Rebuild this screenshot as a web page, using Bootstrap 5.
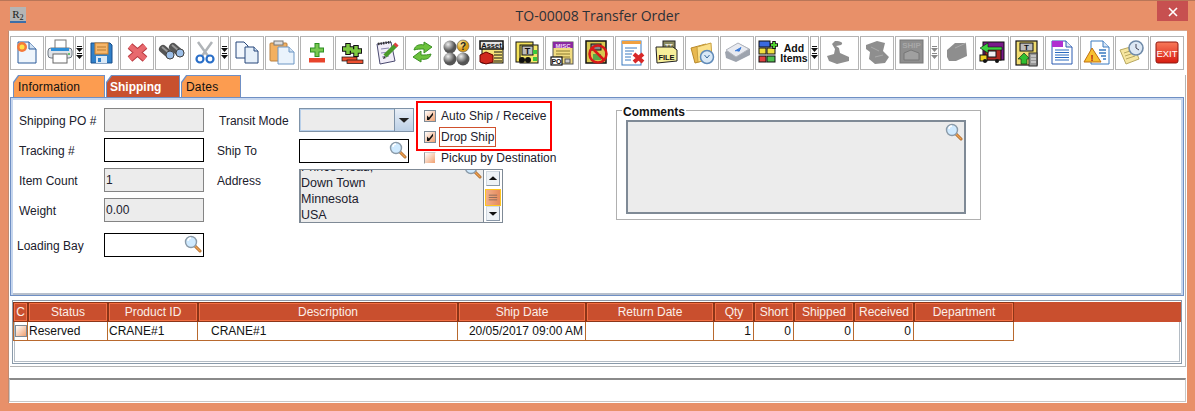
<!DOCTYPE html>
<html lang="en"><head><meta charset="utf-8"><title>TO-00008 Transfer Order</title>
<link href="https://cdn.jsdelivr.net/npm/bootstrap@5.3.0/dist/css/bootstrap.min.css" rel="stylesheet">
<style>
html,body{width:1195px;height:411px;overflow:hidden}
body{background:#e89069;border-top:1px solid #b97658;font:12px/16px "Liberation Sans",Arial,sans-serif;color:#20202c;margin:0}
.tbar{height:29px;position:relative;padding-top:6px}
.r2{width:16px;height:16px;margin-left:10px;background:#b5b5b5;border-bottom:2px solid #3c6ea8;font:11px/14px "Liberation Serif",serif;text-align:center;color:#222;overflow:hidden}
.wtitle{font:14px/29px "Open Sans",sans-serif;color:#2b3138;position:absolute;left:0;right:0;top:0;text-align:center}
.xbtn{position:absolute;left:1157px;top:0;width:31px;height:20px;background:#c75050;color:#fff;text-align:center;line-height:20px}
.wbody{margin:0 8px;height:373px;background:#fff;border-left:1px solid #c08a70;border-top:1px solid #d8a890;padding-left:1px}
.tools{height:43px;padding-top:5px;gap:1px}
.tb{width:34px;height:34px;border:1px solid #b4b4b4;background:#fff;flex:none;overflow:hidden}
.tb svg{display:block;width:100%;height:100%}
.tb.w28{width:29px}.tb.w29{width:29px}.tb.dd{width:9px}.tb.w54{width:54px}.tb.w38{width:39px}
.tabs{height:22px;padding-left:3px;gap:1px;margin-top:1px}
.tabb{position:relative;height:22px;background:#6f8fc4;clip-path:polygon(5px 0,100% 0,100% 100%,0 100%,0 7px);padding:1px 1px 0 1px}
.tabi{height:21px;background:#fc9c50;clip-path:polygon(5px 0,100% 0,100% 100%,0 100%,0 7px);padding:3px 0 0 4px;font-size:12px;letter-spacing:.2px;color:#111}
.tabb.on .tabi{background:#c8502e;color:#fff;font-weight:700;letter-spacing:0;padding-left:3px}
.outer{width:1176px;height:292px;border-right:1px solid #b4b4b4;border-bottom:1px solid #b4b4b4}
.fpanel{width:1174px;height:199px;border:1px solid #6f8fc4;border-top-width:1px;outline:0;background:#fff;box-shadow:inset 0 2px 0 #c6d6ee,inset 2px 0 0 #c6d6ee,inset -2px 0 0 #c6d6ee,inset 0 -2px 0 #b8c0cc;padding:7px 0 0 8px}
.colA{width:185px;padding-top:3px;flex:none}
.frow{height:24px;margin-bottom:6px}
.frow>span{padding-top:2px}
.fld{width:100px;height:24px;border:1px solid #000;background:#fff;position:relative;padding-left:1px;line-height:23px}
.fld.off{border:1px solid #848484;background:#ececec}
.lens{position:absolute;right:1px;top:1px;width:18px;height:18px}
.lb{margin-left:-2px;margin-top:11px;width:187px}
.colB{width:284px;margin-left:15px;flex:none}
.lbl2{width:80px;flex:none}
.lbl2.dn{padding-top:2px}
.combo{width:115px;height:24px;border:1px solid #7f93a8;background:#ececec;box-shadow:inset 0 0 0 1px #b9d0ea}
.carrow{width:19px;margin-left:auto;height:100%;background:linear-gradient(#e8eef6,#bcd0e6);border-left:1px solid #7f93a8}
.carrow svg{display:block;width:100%;height:100%}
.fld.st{width:110px}
.chk{height:21px;gap:5px;padding-left:8px;white-space:nowrap}
.cb{width:12px;height:12px;border:1px solid #7d8a96;background:linear-gradient(135deg,#fff,#f0a070);flex:none;display:block}
.cb.pl{border-color:#c9c9c9 #fff #fff #999}
.ds{outline:1px solid #d0502c;padding:1px 1px;margin-left:-1px}
.redbox{position:absolute;left:0;top:-4px;width:136px;height:50px;border:2px solid #f00;pointer-events:none}
.addr{width:204px;height:54px;border:1px solid #7f8a96;background:#ececec;position:relative;overflow:hidden;border-width:1px 1px 1px 2px}
.addrt{position:absolute;left:0;top:-11px;font-size:12.5px}
.sbar{position:absolute;right:0;top:0;width:19px;height:52px;background:#fff;border-left:1px solid #7f8a96;padding:1px 2px}
.sb{height:15px;background:#eef2f6;border:1px solid #9aa8b8;border-color:#d0d8e0 #8a98a8 #8a98a8 #d0d8e0}
.sb svg{display:block;width:100%;height:100%}
.thumb{height:17px;margin:3px -1px 0;background:linear-gradient(90deg,#f2b08a,#e58a5c);border:1px solid #ffc51e}
.thumb svg{display:block;width:100%;height:100%}
.fset{width:365px;height:110px;border:1px solid #b0b0b0;margin-left:113px;margin-top:5px;position:relative;padding:9px 15px 0 9px;flex:none}
.lgd{position:absolute;left:5px;top:-6px;background:#fff;padding:0 1px;font-weight:700;color:#111;line-height:14px}
.cbox{width:340px;height:94px;border:2px solid #7f8a96;background:#ececec;position:relative}
.tpanel{width:1170px;height:64px;margin:4px 0 0 2px;border:1px solid #8a9aaa;box-shadow:inset 0 0 0 1px #fff,inset 0 0 0 2px #b4bcc4;padding:1px 0 0 0;overflow:hidden}
.thd{background:linear-gradient(#c94f2e,#c94f2e) top/100% 20px no-repeat}
.gridt{table-layout:fixed;width:1001px;border-collapse:separate;border-spacing:0;margin:0}
.gridt th{height:20px;padding:0;background:#c94f2e;color:#fbeee8;font-weight:400;text-align:center;border:1px solid #8c3518;box-shadow:inset 0 0 0 1px #f36f44;line-height:18px}
.gridt td{height:19px;padding:0 2px;border-right:1px solid #b8692e;border-bottom:1px solid #b8692e;line-height:18px;color:#111;white-space:nowrap;overflow:hidden}
.gridt td:first-child{border-left:1px solid #b8692e;padding:0 0 0 1px}
.gridt td.tl{padding-left:1px}
.status{width:1177px;height:24px;margin:11px 0 0 -1px;border:1px solid #c8c8c8;border-top:2px solid #8a8a8a;background:#fff}
</style></head><body>
<svg width="0" height="0" class="position-absolute"><defs>
<symbol id="lens" viewBox="0 0 18 18"><path d="M11 11l5 5" stroke="#a8682a" stroke-width="3" stroke-linecap="round"/><path d="M11 11l5 5" stroke="#f0a050" stroke-width="1.4" stroke-linecap="round"/><circle cx="7" cy="7" r="5.5" fill="#cfeaff" stroke="#8a9aa8" stroke-width="1.4"/><path d="M4 6a3 3 0 0 1 3-3" stroke="#fff" stroke-width="1.4" fill="none"/></symbol>
<symbol id="ddk" viewBox="0 0 7 32"><path d="M1 9h5v1H1zM0 11h7L3.500 15zM1 16h5v1H1zM0 18h7L3.500 22z" fill="#111"/></symbol>
<symbol id="ddg" viewBox="0 0 7 32"><path d="M1 9h5v1H1zM0 11h7L3.500 15zM1 16h5v1H1zM0 18h7L3.500 22z" fill="#8a8a8a"/></symbol>
</defs></svg>
<div class="tbar"><div class="r2">R<sub>2</sub></div><div class="wtitle">TO-00008 Transfer Order</div><div class="xbtn"><svg width="10" height="10" viewBox="0 0 10 10"><path d="M1 1l8 8M9 1l-8 8" stroke="#fff" stroke-width="1.6"/></svg></div></div>
<div class="wbody">
<div class="tools d-flex">
<div class="tb"><svg><path d="M7 5H18L25 12V26H7Z" fill="#eef5fc" stroke="#2b5a9a"/><path d="M18 5V12H25" fill="#cfe0f2" stroke="#2b5a9a"/><circle cx="11" cy="10" r="5" fill="#f57a3a"/><circle cx="11" cy="10" r="2.500" fill="#ffe14a"/></svg></div>
<div class="tb w28"><svg><rect x="9" y="3" width="11" height="10" fill="#fff" stroke="#777"/><rect x="2" y="11" width="24" height="10" rx="3" fill="#dfe3e8" stroke="#6d7680"/><rect x="5" y="11" width="18" height="3" fill="#2f8fd8"/><rect x="7" y="17" width="14" height="9" fill="#fff" stroke="#666"/><circle cx="23" cy="17" r="1" fill="#3bb54a"/></svg></div>
<div class="tb dd"><svg viewBox="0 0 7 32"><use href="#ddk"/></svg></div>
<div class="tb"><svg><path d="M5 6H24L26 8V26H5Z" fill="#2f7fc8" stroke="#1b4f8a"/><rect x="9" y="6" width="13" height="11" fill="#f6b66a" stroke="#c87f2a"/><path d="M11 10H20M11 13H20" stroke="#b87a30"/><rect x="10" y="19" width="11" height="7" fill="#d9e8f6"/><rect x="12" y="21" width="3" height="4" fill="#2f7fc8"/></svg></div>
<div class="tb"><svg><path d="M9 9L24 22M24 9L9 22" stroke="#b83a40" stroke-width="7"/><path d="M9 9L24 22M24 9L9 22" stroke="#e8696e" stroke-width="5"/></svg></div>
<div class="tb"><svg><path d="M7 12L14 18M17 10L24 16" stroke="#555" stroke-width="8" stroke-linecap="round"/><path d="M6 10L12 15M16 8L22 13" stroke="#999" stroke-width="2"/><circle cx="14" cy="18" r="4" fill="#9dbfe8" stroke="#444"/><circle cx="24" cy="16" r="4" fill="#9dbfe8" stroke="#444"/></svg></div>
<div class="tb w29"><svg><path d="M7 5L17 19M21 5L11 19" stroke="#b0b4b8" stroke-width="2.500"/><circle cx="9" cy="22" r="3.500" fill="none" stroke="#2a6fc8" stroke-width="2.200"/><circle cx="19" cy="22" r="3.500" fill="none" stroke="#2a6fc8" stroke-width="2.200"/></svg></div>
<div class="tb dd"><svg viewBox="0 0 7 32"><use href="#ddk"/></svg></div>
<div class="tb"><svg><path d="M5 5H13L17 9V21H5Z" fill="#f2f7fd" stroke="#27477a"/><path d="M14 10H23L27 14V26H14Z" fill="#e6f0fa" stroke="#27477a"/><path d="M23 10V14H27" fill="#cfe0f2" stroke="#27477a"/></svg></div>
<div class="tb"><svg><rect x="4" y="6" width="17" height="18" rx="1" fill="#f3b060" stroke="#b88040"/><rect x="8" y="4" width="9" height="4" fill="#ddd" stroke="#777"/><path d="M12 10H23L28 15V27H12Z" fill="#eaf3fc" stroke="#6d96c4"/><path d="M23 10V15H28" fill="#cfe0f2" stroke="#6d96c4"/></svg></div>
<div class="tb"><svg><path d="M16 6V20M9 13H23" stroke="#2c8f22" stroke-width="5"/><path d="M16 7V19M10 13H22" stroke="#78c850" stroke-width="3"/><rect x="8" y="21" width="16" height="4.500" fill="#e8442c"/></svg></div>
<div class="tb"><svg><path d="M12 6V18M6 12H18M20 8V20M14 14H26" stroke="#111" stroke-width="5.500"/><path d="M12 7V17M7 12H17M20 9V19M15 14H25" stroke="#7cc840" stroke-width="3.500"/><rect x="6" y="20" width="15" height="4" fill="#ee5030" stroke="#111" stroke-width=".7"/><rect x="11" y="23" width="16" height="3.500" fill="#ee5030" stroke="#111" stroke-width=".7"/></svg></div>
<div class="tb"><svg><path d="M6 7L20 5L24 24L9 27Z" fill="#f1edf8" stroke="#4a4a70"/><path d="M7 7L20 5" stroke="#333" stroke-width="2.500" stroke-dasharray="1.500 1"/><path d="M10 12L18 11M10 16L18 15M11 20L18 19" stroke="#8a88b0"/><path d="M14 19L25 8" stroke="#4a9a2a" stroke-width="4.500"/><path d="M24 9L26 7" stroke="#e04040" stroke-width="4.500"/><path d="M12 22l1-3 2 2z" fill="#333"/></svg></div>
<div class="tb"><svg><path d="M8 13C9 8 14 7 18 8V5L26 10L18 16V12C14 12 11 12 8 13Z" fill="#6cc23c" stroke="#3b8f24"/><path d="M25 17C24 22 19 23 15 22V25L7 20L15 14V18C19 18 22 18 25 17Z" fill="#6cc23c" stroke="#3b8f24"/></svg></div>
<div class="tb"><svg><defs><radialGradient id="ball" cx=".35" cy=".3"><stop offset="0" stop-color="#eee"/><stop offset="1" stop-color="#555"/></radialGradient><radialGradient id="gball" cx=".35" cy=".3"><stop offset="0" stop-color="#fff3a8"/><stop offset="1" stop-color="#d89a14"/></radialGradient></defs><circle cx="9" cy="10" r="6.500" fill="url(#ball)"/><circle cx="22" cy="22" r="6.500" fill="url(#ball)"/><circle cx="9" cy="22" r="6.500" fill="url(#ball)"/><circle cx="22" cy="9" r="6" fill="url(#gball)" stroke="#555" stroke-width=".6"/><text x="22" y="13" font-size="10" font-weight="700" text-anchor="middle" font-family="Liberation Sans" fill="#222">?</text></svg></div>
<div class="tb"><svg><rect x="6" y="9" width="21" height="17" fill="#f6e27a" stroke="#111"/><rect x="4" y="4" width="23" height="8" fill="#e4e4e4" stroke="#111" stroke-width="1.500"/><text x="15.500" y="10.500" font-size="7.500" font-weight="700" text-anchor="middle" font-family="Liberation Sans" fill="#111">Asset</text><path d="M18 15H26M18 18H26M18 21H26M18 24H26" stroke="#111"/><path d="M4 18L10 15L17 18V25L10 27L4 25Z" fill="#d0281e" stroke="#600"/></svg></div>
<div class="tb"><svg><rect x="5" y="5" width="17" height="20" fill="#f4e25a" stroke="#111"/><rect x="9" y="8" width="18" height="18" fill="#f6e86a" stroke="#111"/><rect x="11" y="9" width="11" height="9" fill="#bbb" stroke="#111"/><text x="16.500" y="17" font-size="9" font-weight="700" text-anchor="middle" font-family="Liberation Sans" fill="#111">T</text><rect x="22" y="13" width="4" height="4" fill="#3cc83c"/><rect x="22" y="20" width="4" height="4" fill="#3cc83c"/><circle cx="11" cy="23" r="3" fill="#111"/><circle cx="17" cy="23" r="3" fill="#111"/></svg></div>
<div class="tb"><svg><rect x="7" y="5" width="20" height="22" fill="#f1dc80" stroke="#555"/><rect x="7" y="5" width="20" height="6" fill="#8a2aa0"/><text x="17" y="10.500" font-size="6" font-weight="700" text-anchor="middle" font-family="Liberation Sans" fill="#f0d8f8">MISC</text><path d="M10 14H24M10 17H24M10 20H24" stroke="#8a7a30"/><rect x="5" y="20" width="11" height="8" fill="#fff" stroke="#111" stroke-width="1.200"/><text x="10.500" y="27" font-size="7" font-weight="700" text-anchor="middle" font-family="Liberation Sans" fill="#111">PO</text><rect x="19" y="22" width="5" height="4" fill="#ccc" stroke="#555"/></svg></div>
<div class="tb"><svg><rect x="5" y="4" width="20" height="22" fill="#d8c850" stroke="#111" stroke-width="1.500"/><rect x="10" y="7" width="10" height="6" fill="#888" stroke="#111"/><rect x="12" y="17" width="8" height="6" fill="#58a848"/><circle cx="17" cy="17" r="8.500" fill="none" stroke="#d81818" stroke-width="2.500"/><path d="M11 11L23 23" stroke="#d81818" stroke-width="2.500"/></svg></div>
<div class="tb"><svg><rect x="6" y="4" width="19" height="24" fill="#fff" stroke="#3a7ac0"/><rect x="6" y="4" width="19" height="3" fill="#f0a040"/><path d="M9 11H21M9 14H18M9 17H16M9 20H15M9 23H15" stroke="#3a7ac0"/><path d="M18 17L27 25M27 17L18 25" stroke="#d82828" stroke-width="4"/></svg></div>
<div class="tb"><svg><rect x="12" y="4" width="12" height="8" fill="#8a8a60" stroke="#222"/><text x="18" y="10.500" font-size="6" font-weight="700" text-anchor="middle" font-family="Liberation Sans" fill="#eee">TT</text><path d="M5 10H22L26 13V24L6 26Z" fill="#f6ee9a" stroke="#222"/><text x="15.500" y="23" font-size="7.500" font-weight="700" text-anchor="middle" font-family="Liberation Sans" fill="#111">FILE</text></svg></div>
<div class="tb"><svg><path d="M5 11L20 7V23L9 26Z" fill="#e8b850" stroke="#b8892a"/><path d="M11 10L25 6L26 22L12 25Z" fill="#fbe08a" stroke="#c8a040"/><circle cx="21" cy="20" r="6.500" fill="#d8e8f6" stroke="#5f8ab8" stroke-width="1.500"/><path d="M18.500 18L21 21L23.500 18" stroke="#3a6a9a" fill="none"/></svg></div>
<div class="tb"><svg><path d="M4 15L17 6L29 12V18L15 25L5 21Z" fill="#9ea4ae"/><path d="M5 13L17 6L28 12L15 20Z" fill="#e8eaf0" stroke="#b0b4bc"/><path d="M14 14L20 10.500L18 14.500" fill="#3a7ad8" stroke="#3a7ad8"/></svg></div>
<div class="tb w54 d-flex"><svg style="width:24px;flex:none" aria-hidden="true"><rect x="3" y="4" width="11" height="6" fill="#3a6ae0" stroke="#111"/><rect x="3" y="11" width="7" height="6" fill="#f0e040" stroke="#111"/><rect x="11" y="11" width="8" height="6" fill="#f0e040" stroke="#111"/><rect x="3" y="19" width="7" height="6" fill="#e04040" stroke="#111"/><rect x="11" y="19" width="8" height="6" fill="#50c050" stroke="#111"/><path d="M18 4V12M14 8H22" stroke="#111" stroke-width="3.500"/><path d="M18 5V11M15 8H21" stroke="#50d030" stroke-width="2"/></svg><div class="text-center fw-bold" style="font-size:10.500px;line-height:10px;margin-top:6px;color:#111;flex:1">Add<br>Items</div></div>
<div class="tb dd"><svg viewBox="0 0 7 32"><use href="#ddk"/></svg></div>
<div class="tb w38"><svg><path d="M14 4C20 4 23 6 20 8L15 9L18 11L19 16L28 20L28 24L16 27L8 24L6 19L13 17L14 12L11 7Z" fill="#8e8e8e"/></svg></div>
<div class="tb"><svg><path d="M5 8L16 4L24 6L22 14L28 20L24 26L14 27L8 22L9 15L5 12Z" fill="#8e8e8e"/><path d="M10 10l8 4M14 20l8-2" stroke="#aaa"/></svg></div>
<div class="tb"><svg><rect x="4" y="3" width="23" height="23" fill="#8e8e8e" stroke="#777"/><text x="15.500" y="11" font-size="8" font-weight="700" text-anchor="middle" font-family="Liberation Sans" fill="#a8a8a8">SHIP</text><path d="M8 16L15 13L23 16V23H8Z" fill="#a0a0a0" stroke="#777"/></svg></div>
<div class="tb dd"><svg viewBox="0 0 7 32"><use href="#ddg"/></svg></div>
<div class="tb"><svg><path d="M6 13L14 6H25L26 19L15 24H8L6 20Z" fill="#8e8e8e"/><path d="M14 11L25 6" stroke="#aaa"/></svg></div>
<div class="tb"><svg><rect x="7" y="5" width="21" height="18" fill="#7a1a8a" stroke="#111"/><rect x="9" y="12" width="16" height="11" fill="#b02a20" stroke="#111"/><rect x="12" y="14" width="8" height="6" fill="#f0f0f0" stroke="#111"/><path d="M26 10H12V6L4 11L12 16V13H26Z" fill="#3cd040" stroke="#111" stroke-width=".6"/><rect x="4" y="18" width="7" height="6" fill="#f0d020" stroke="#111"/><circle cx="9" cy="24" r="2" fill="#111"/><circle cx="21" cy="24" r="2" fill="#111"/></svg></div>
<div class="tb"><svg><rect x="5" y="4" width="21" height="24" fill="#f1dd70" stroke="#111" stroke-width="1.200"/><rect x="9" y="6" width="13" height="8" fill="#bbb" stroke="#111"/><text x="15.500" y="13" font-size="8" font-weight="700" text-anchor="middle" font-family="Liberation Sans" fill="#111">T</text><path d="M10 27V22H7L13 16L19 22H16V27Z" fill="#30c030" stroke="#111" stroke-width=".6"/><rect x="18" y="16" width="8" height="13" fill="#999" stroke="#333"/><path d="M20 19H25M20 22H25M20 25H25" stroke="#eee"/></svg></div>
<div class="tb"><svg><path d="M6 4H20L26 10V27H6Z" fill="#fff" stroke="#2a5ab0"/><path d="M6 4H17V10H6Z" fill="#b030d0"/><path d="M20 4V10H26" fill="#dfe8f6" stroke="#2a5ab0"/><path d="M9 13H23M9 15.500H23M9 18H23M9 20.500H23M9 23H23" stroke="#2a6ac0"/></svg></div>
<div class="tb"><svg><path d="M10 4H22L28 10V27H10Z" fill="#fff" stroke="#3a7ac0"/><path d="M22 4V10H28" fill="#d8e6f6" stroke="#3a7ac0"/><path d="M18 13H25M18 16H25M20 19H25M22 22H25" stroke="#3a7ac0" stroke-width="1.300"/><path d="M11 11L20 25H3Z" fill="#f8c030" stroke="#c07010"/><text x="11" y="24" font-size="9" font-weight="700" text-anchor="middle" font-family="Liberation Sans" fill="#b02010">!</text></svg></div>
<div class="tb"><svg><path d="M4 13L18 9L23 22L10 27Z" fill="#f6e6a0" stroke="#b8a860"/><path d="M8 16L17 13M9 19L18 16M10 22L19 19" stroke="#b8a860"/><circle cx="20" cy="11" r="7" fill="#dde8f4" stroke="#6f8aa8" stroke-width="1.600"/><path d="M20 7V11L23 13" stroke="#445" fill="none"/></svg></div>
<div class="tb"><svg><defs><linearGradient id="ex" x1="0" y1="0" x2="0" y2="1"><stop offset="0" stop-color="#f87a5a"/><stop offset="1" stop-color="#d81c10"/></linearGradient></defs><rect x="5" y="5" width="22" height="21" rx="2" fill="url(#ex)" stroke="#901810"/><text x="16" y="19.500" font-size="9.500" text-anchor="middle" font-family="Liberation Sans" fill="#fff">EXIT</text></svg></div>
</div>
<div class="outer">
<div class="tabs d-flex">
<div class="tabb" style="width:92px"><div class="tabi">Information</div></div>
<div class="tabb on" style="width:74px"><div class="tabi">Shipping</div></div>
<div class="tabb" style="width:60px"><div class="tabi">Dates</div></div>
</div>
<div class="fpanel d-flex">
<div class="colA">
<div class="frow d-flex justify-content-between align-items-center"><span>Shipping PO #</span><div class="fld off"></div></div>
<div class="frow d-flex justify-content-between align-items-center"><span>Tracking #</span><div class="fld"></div></div>
<div class="frow d-flex justify-content-between align-items-center"><span>Item Count</span><div class="fld off">1</div></div>
<div class="frow d-flex justify-content-between align-items-center"><span>Weight</span><div class="fld off">0.00</div></div>
<div class="frow lb d-flex justify-content-between align-items-center"><span>Loading Bay</span><div class="fld"><svg class="lens"><use href="#lens"/></svg></div></div>
</div>
<div class="colB">
<div class="d-flex">
<div style="width:197px;padding-top:3px" class="flex-none">
<div class="d-flex align-items-center" style="height:24px;margin-bottom:7px"><span class="lbl2 dn">Transit Mode</span><div class="combo d-flex"><div class="carrow"><svg viewBox="0 0 19 22"><path d="M4 9h11l-5.500 5z" fill="#222"/></svg></div></div></div>
<div class="d-flex align-items-center" style="height:24px;margin-left:-2px;width:199px"><span class="lbl2" style="width:82px">Ship To</span><div class="fld st"><svg class="lens"><use href="#lens"/></svg></div></div>
</div>
<div class="position-relative flex-fill">
<div class="redbox"></div>
<div class="chk d-flex align-items-center"><i class="cb"><svg viewBox="0 0 10 10" class="d-block"><path d="M2 9L2 4.500L4 6.500L8 1.500L8 4L4 9Z" fill="#111"/></svg></i><span>Auto Ship / Receive</span></div>
<div class="chk d-flex align-items-center"><i class="cb"><svg viewBox="0 0 10 10" class="d-block"><path d="M2 9L2 4.500L4 6.500L8 1.500L8 4L4 9Z" fill="#111"/></svg></i><span class="ds">Drop Ship</span></div>
<div class="chk d-flex align-items-center"><i class="cb pl"></i><span>Pickup by Destination</span></div>
</div>
</div>
<div class="d-flex" style="margin-left:-2px;margin-top:1px"><span class="lbl2" style="width:82px;padding-top:4px">Address</span>
<div class="addr"><div class="addrt">Prince Road,<br>Down Town<br>Minnesota<br>USA</div><svg class="lens" style="top:-9px;right:20px"><use href="#lens"/></svg>
<div class="sbar"><div class="sb"><svg viewBox="0 0 13 13"><path d="M2 8h9L6.500 4z" fill="#111"/></svg></div><div class="thumb"><svg viewBox="0 0 15 15"><path d="M3 5H12M3 7.500H12M3 10H12" stroke="#8a6a58"/></svg></div><div class="sb"><svg viewBox="0 0 13 13"><path d="M2 5h9l-4.500 4z" fill="#111"/></svg></div></div>
</div></div>
</div>
<div class="fset"><div class="lgd">Comments</div><div class="cbox"><svg class="lens" style="top:1px;right:1px"><use href="#lens"/></svg></div></div>
</div>
<div class="tpanel"><div class="thd">
<table class="gridt"><colgroup><col style="width:15px"><col style="width:80px"><col style="width:90px"><col style="width:260px"><col style="width:128px"><col style="width:128px"><col style="width:40px"><col style="width:40px"><col style="width:60px"><col style="width:60px"><col style="width:100px"></colgroup>
<thead><tr><th>C</th><th>Status</th><th>Product ID</th><th>Description</th><th>Ship Date</th><th>Return Date</th><th>Qty</th><th>Short</th><th>Shipped</th><th>Received</th><th>Department</th></tr></thead>
<tbody><tr><td><i class="cb"></i></td><td class="tl">Reserved</td><td class="tl">CRANE#1</td><td style="padding-left:13px">CRANE#1</td><td class="text-end">20/05/2017 09:00 AM</td><td></td><td class="text-end">1</td><td class="text-end">0</td><td class="text-end">0</td><td class="text-end">0</td><td></td></tr></tbody></table>
</div></div>
</div>
<div class="status"></div>
</div>
</body></html>
